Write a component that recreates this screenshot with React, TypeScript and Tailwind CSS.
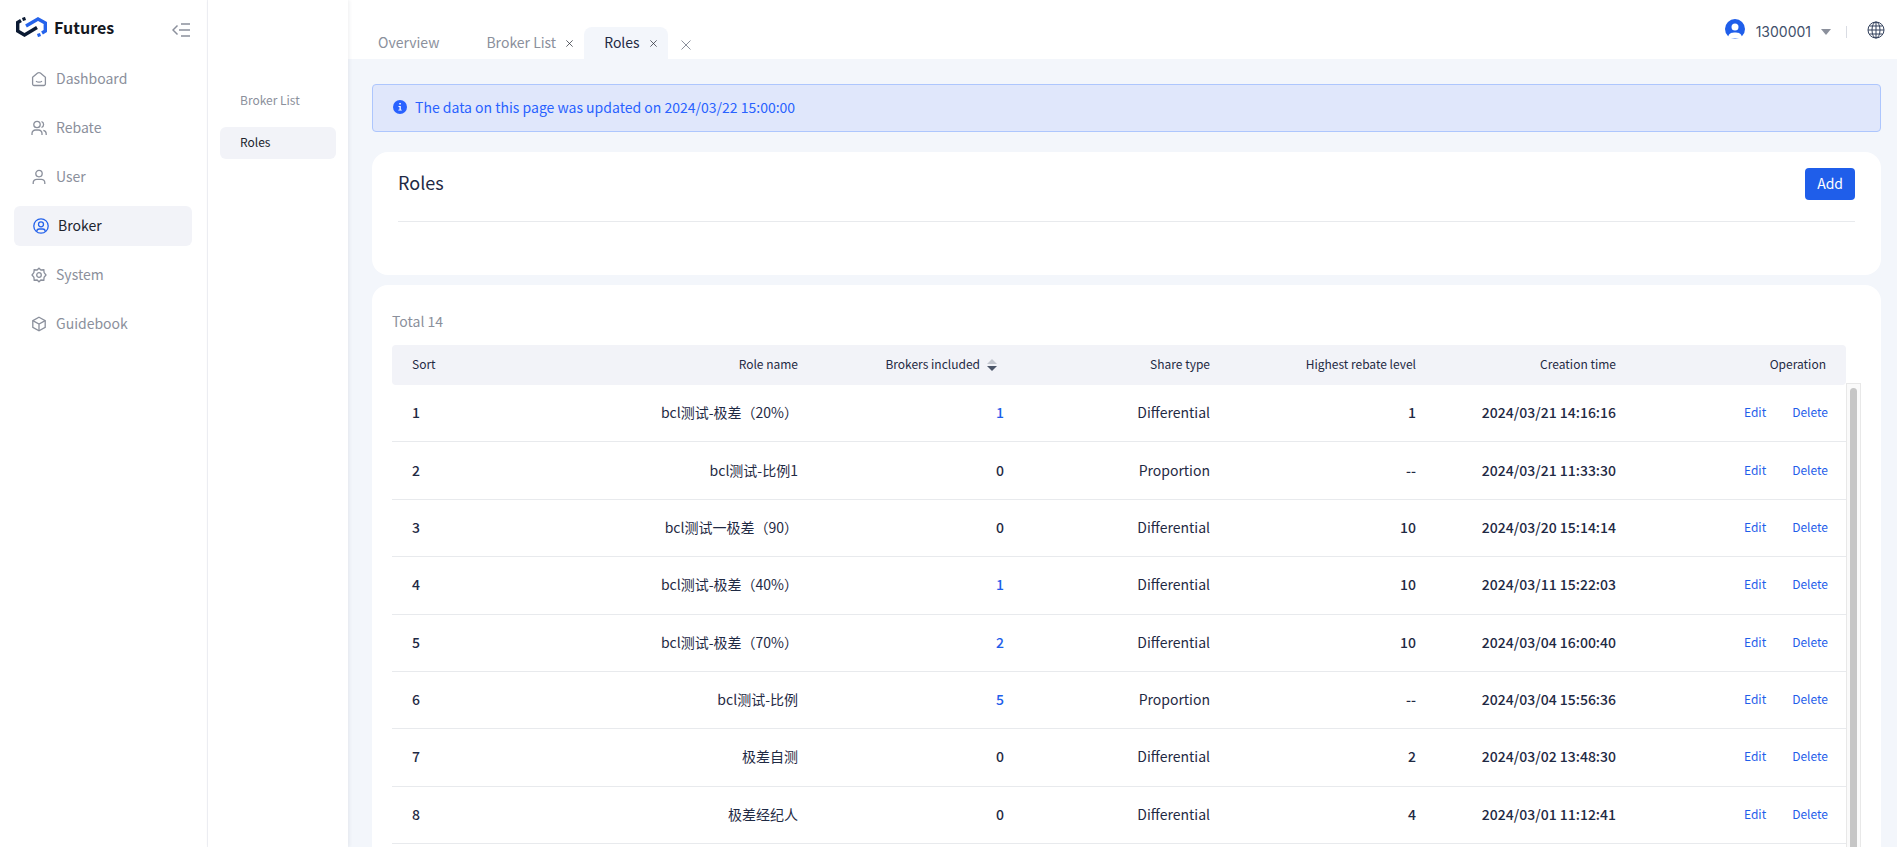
import { useState } from 'react';
import type { ReactNode } from 'react';

const NAV = ['Dashboard', 'Rebate', 'User', 'Broker', 'System', 'Guidebook'];

const ICONS: Record<string, ReactNode> = {
  Dashboard: (
    <>
      <path d="M1.600 6.300 6.600 2.100q1.400-1.100 2.800 0l5 4.200v6.700a1.500 1.500 0 0 1-1.500 1.500H3.100A1.500 1.500 0 0 1 1.600 13z" />
      <path d="M5 10.200c1.800 1.200 4.200 1.200 6 0" />
    </>
  ),
  Rebate: (
    <>
      <circle cx="6" cy="4.500" r="3.200" />
      <path d="M1 15v-1.500a3.500 3.500 0 0 1 3.500-3.500h3A3.500 3.500 0 0 1 11 13.500V15M10.500 1.500a3.200 3.200 0 0 1 0 6M12.300 10.300A3.500 3.500 0 0 1 15.200 13.700V15" />
    </>
  ),
  User: (
    <>
      <circle cx="8" cy="4.600" r="3.200" />
      <path d="M2.200 15v-1.200a3.500 3.500 0 0 1 3.500-3.500h4.600a3.500 3.500 0 0 1 3.500 3.500V15" />
    </>
  ),
  Broker: (
    <>
      <circle cx="8" cy="8" r="7.200" />
      <circle cx="8" cy="6.300" r="2.500" />
      <path d="M3.800 13.500c0-1.800 1.200-2.500 2.500-2.500h3.400c1.300 0 2.500.7 2.500 2.500" />
    </>
  ),
  System: (
    <>
      <circle cx="8" cy="8" r="2.300" />
      <path d="M8 1.200 9.900 3l2.900-.2.300 2.800L15 8l-1.900 2.300-.3 2.900-2.900-.2L8 14.800 6.100 13l-2.900.2-.3-2.900L1 8l1.900-2.400.3-2.800 2.900.2z" />
    </>
  ),
  Guidebook: (
    <>
      <path d="M8 1.200 14.200 4.600v6.800L8 14.800 1.800 11.400V4.600z" />
      <path d="M1.800 4.600 8 8l6.200-3.400M8 8v6.800" />
    </>
  ),
};

const ROWS = [
  { name: 'bcl测试-极差（20%）', brokers: 1, type: 'Differential', level: '1', time: '2024/03/21 14:16:16' },
  { name: 'bcl测试-比例1', brokers: 0, type: 'Proportion', level: '--', time: '2024/03/21 11:33:30' },
  { name: 'bcl测试一极差（90）', brokers: 0, type: 'Differential', level: '10', time: '2024/03/20 15:14:14' },
  { name: 'bcl测试-极差（40%）', brokers: 1, type: 'Differential', level: '10', time: '2024/03/11 15:22:03' },
  { name: 'bcl测试-极差（70%）', brokers: 2, type: 'Differential', level: '10', time: '2024/03/04 16:00:40' },
  { name: 'bcl测试-比例', brokers: 5, type: 'Proportion', level: '--', time: '2024/03/04 15:56:36' },
  { name: '极差自测', brokers: 0, type: 'Differential', level: '2', time: '2024/03/02 13:48:30' },
  { name: '极差经纪人', brokers: 0, type: 'Differential', level: '4', time: '2024/03/01 11:12:41' },
];

function Cross({ className }: { className: string }) {
  return (
    <svg viewBox="0 0 10 10" className={className} fill="none" stroke="currentColor">
      <path d="M.5.5l9 9M9.500.5l-9 9" />
    </svg>
  );
}

function Sidebar() {
  const [active, setActive] = useState('Broker');

  return (
    <aside className="w-[208px] shrink-0 border-r border-[#f0f1f5]">
      <div className="h-[59px] flex items-start pl-4 pr-[17px]">
        <svg viewBox="0 0 31 20" className="w-[31px] h-5 mt-[17px]" fill="none" strokeWidth="3.400">
          <path d="M5 3.500 1.700 5.500v8.500L8.500 18 21 10.500" stroke="#0b1a33" />
          <path d="M10 9 22 2l7.300 4v8L26 16" stroke="#2563eb" />
          <path d="M6.500 2.500 9.500 1.500" stroke="#0b1a33" />
          <path d="M21.500 18.500 24.500 17.500" stroke="#2563eb" />
        </svg>
        <span className="ml-[7px] mt-[15px] text-base leading-6 font-bold text-[#15181f]">Futures</span>
        <button className="ml-auto mt-[22px]" aria-label="Collapse menu">
          <svg viewBox="0 0 18 16" className="w-[18px] h-4" fill="none" stroke="#8b909c" strokeWidth="1.500">
            <path d="M5.500 3.500 1 8l4.500 4.500M9 2h9M7 8h11M9 14h9" />
          </svg>
        </button>
      </div>
      <nav className="flex flex-col gap-[9px] pl-[14px] pr-[15px]">
        {NAV.map((item) => (
          <a
            key={item}
            href="#"
            onClick={() => setActive(item)}
            className={`h-10 flex items-center gap-[9px] rounded-md text-sm ${active === item ? 'pl-[19px] bg-[#f2f3f8] text-[#20242e]' : 'pl-[17px] text-[#8b909c]'}`}
          >
            <svg
              viewBox="0 0 16 16"
              className={`w-4 h-4 ${active === item ? 'text-[#2563eb]' : ''}`}
              fill="none"
              stroke="currentColor"
              strokeWidth="1.300"
            >
              {ICONS[item]}
            </svg>
            <span className="pb-0.5">{item}</span>
          </a>
        ))}
      </nav>
    </aside>
  );
}

function Header() {
  return (
    <header className="h-[59px] shrink-0 bg-white flex items-end justify-between">
      <div className="h-8 flex items-center text-sm text-[#8b909c]">
        <a href="#" className="pl-[30px] pr-[27px] pb-0.5">Overview</a>
        <div className="flex items-center pl-5 pr-[11px] gap-[10px]">
          <a href="#" className="pb-0.5">Broker List</a>
          <button aria-label="Close Broker List" className="text-[#20242e]">
            <Cross className="w-[7px] h-[7px]" />
          </button>
        </div>
        <div className="h-8 flex items-center pl-5 pr-[11px] gap-[10px] rounded-t-lg bg-[#f3f6fb]">
          <a href="#" className="pb-0.5 text-[#1f2a44]">Roles</a>
          <button aria-label="Close Roles" className="text-[#20242e]">
            <Cross className="w-[7px] h-[7px]" />
          </button>
        </div>
        <button aria-label="Close all tabs" className="ml-[13px] mt-1">
          <Cross className="w-[10px] h-[10px]" />
        </button>
      </div>
      <div className="h-full flex items-center pr-3">
        <svg viewBox="0 0 20 20" className="w-5 h-5 mb-0.5">
          <circle cx="10" cy="10" r="10" fill="#1f5eea" />
          <circle cx="10" cy="8" r="3.500" fill="#fff" />
          <path d="M3 18c1-4 4-4.500 7-4.500s6 .5 7 4.500l-3 1.500H6z" fill="#fff" />
        </svg>
        <button className="ml-[11px] mt-1 flex items-center gap-[10px] text-sm text-[#42506a] font-['Inter',sans-serif]">
          1300001
          <svg viewBox="0 0 10 6" className="w-[10px] h-[6px]" fill="#8b909c">
            <path d="M0 0h10L5 6z" />
          </svg>
        </button>
        <span className="ml-[15px] mt-1 w-px h-3 bg-[#d9dce3]" />
        <button aria-label="Language" className="ml-5">
          <svg viewBox="0 0 18 18" className="w-[18px] h-[18px]" fill="none" stroke="#33415c">
            <circle cx="9" cy="9" r="8" />
            <ellipse cx="9" cy="9" rx="4" ry="8" />
            <path d="M9 1v16M1 9h16M2.500 5h13M2.500 13h13" />
          </svg>
        </button>
      </div>
    </header>
  );
}

function RoleTable() {
  return (
    <table className="flex-1 h-[499px] table-fixed border-separate border-spacing-0 text-right text-sm">
      <colgroup>
        <col className="w-[180px]" />
        <col />
        <col className="w-[206px]" />
        <col className="w-[206px]" />
        <col className="w-[206px]" />
        <col className="w-[200px]" />
        <col className="w-[210px]" />
      </colgroup>
      <thead>
        <tr className="h-10 bg-[#f2f3f8] text-xs *:px-5 *:pb-0.5 *:font-normal">
          <th className="text-left rounded-l-sm">Sort</th>
          <th>Role name</th>
          <th>
            <button className="inline-flex items-center gap-[7px] mr-[7px]">
              Brokers included
              <svg viewBox="0 0 10 12" className="w-[10px] h-3 mt-0.5">
                <path d="M0 5 5 0l5 5z" fill="#c3c7cf" />
                <path d="M0 7h10l-5 5z" fill="#4b5568" />
              </svg>
            </button>
          </th>
          <th>Share type</th>
          <th>Highest rebate level</th>
          <th>Creation time</th>
          <th className="rounded-r-sm">Operation</th>
        </tr>
      </thead>
      <tbody>
        {ROWS.map((row, i) => (
          <tr key={row.name} className="*:px-5 *:pb-0.5 *:border-b *:border-[#e8eaed]">
            <td className="text-left font-medium">{i + 1}</td>
            <td>{row.name}</td>
            <td className="font-medium">
              {row.brokers > 0 ? <a href="#" className="text-[#1f5eea]">{row.brokers}</a> : row.brokers}
            </td>
            <td>{row.type}</td>
            <td className="font-medium">{row.level}</td>
            <td className="font-medium">{row.time}</td>
            <td>
              <div className="-mr-0.5 flex justify-end gap-[26px] text-xs text-[#1f5eea]">
                <button>Edit</button>
                <button>Delete</button>
              </div>
            </td>
          </tr>
        ))}
      </tbody>
    </table>
  );
}

export default function App() {
  return (
    <div className="h-screen flex overflow-hidden bg-white text-[#1f2a44] font-['Noto_Sans_CJK_SC',sans-serif]">
      <Sidebar />
      <nav className="relative w-[140px] shrink-0 flex flex-col gap-[10px] pt-[85px] px-3 text-xs shadow-[1px_0_4px_rgba(31,42,68,0.08)]">
        <a href="#" className="h-8 flex items-center pl-5 pb-0.5 rounded-md text-[#8b909c]">Broker List</a>
        <a href="#" className="h-8 flex items-center pl-5 pb-0.5 rounded-md bg-[#f2f3f8] text-[#20242e]">Roles</a>
      </nav>
      <div className="flex-1 min-w-0 flex flex-col bg-[#f3f6fb]">
        <Header />
        <main className="flex-1 min-h-0 flex flex-col pt-[25px] pl-6 pr-4">
          <div className="h-12 shrink-0 flex items-center gap-2 px-5 rounded border border-[#adc6fd] bg-[#e0e7fb] text-sm text-[#2962ff]">
            <svg viewBox="0 0 14 14" className="w-[14px] h-[14px] mb-0.5">
              <circle cx="7" cy="7" r="7" fill="#2962ff" />
              <path d="M6.300 3h1.500v1.400H6.300zM5.500 6h2.300v3.700h1v.9H5.300v-.9h1.200V6.900h-1z" fill="#fff" />
            </svg>
            <p className="pb-0.5">The data on this page was updated on 2024/03/22 15:00:00</p>
          </div>

          <section className="mt-5 shrink-0 px-[26px] pt-4 h-[123px] rounded-2xl bg-white">
            <div className="flex items-start justify-between pb-[21px] border-b border-[#e8eaed]">
              <h1 className="text-lg leading-7">Roles</h1>
              <button className="h-8 px-3 rounded bg-[#1f5eea] text-sm text-white pb-0.5">Add</button>
            </div>
          </section>

          <section className="mt-[10px] flex-1 min-h-0 px-5 pt-6 rounded-t-2xl bg-white overflow-hidden">
            <p className="h-9 leading-6 text-sm text-[#8b909c]">Total 14</p>
            <div className="flex items-start">
              <RoleTable />
              <div className="w-[15px] h-[464px] mt-[38px] pt-1 px-[3px] border border-b-0 border-[#e8e8e8] bg-[#fafafa]">
                <div className="h-full rounded-t-full bg-[#c6c6c6]" />
              </div>
            </div>
          </section>
        </main>
      </div>
    </div>
  );
}
